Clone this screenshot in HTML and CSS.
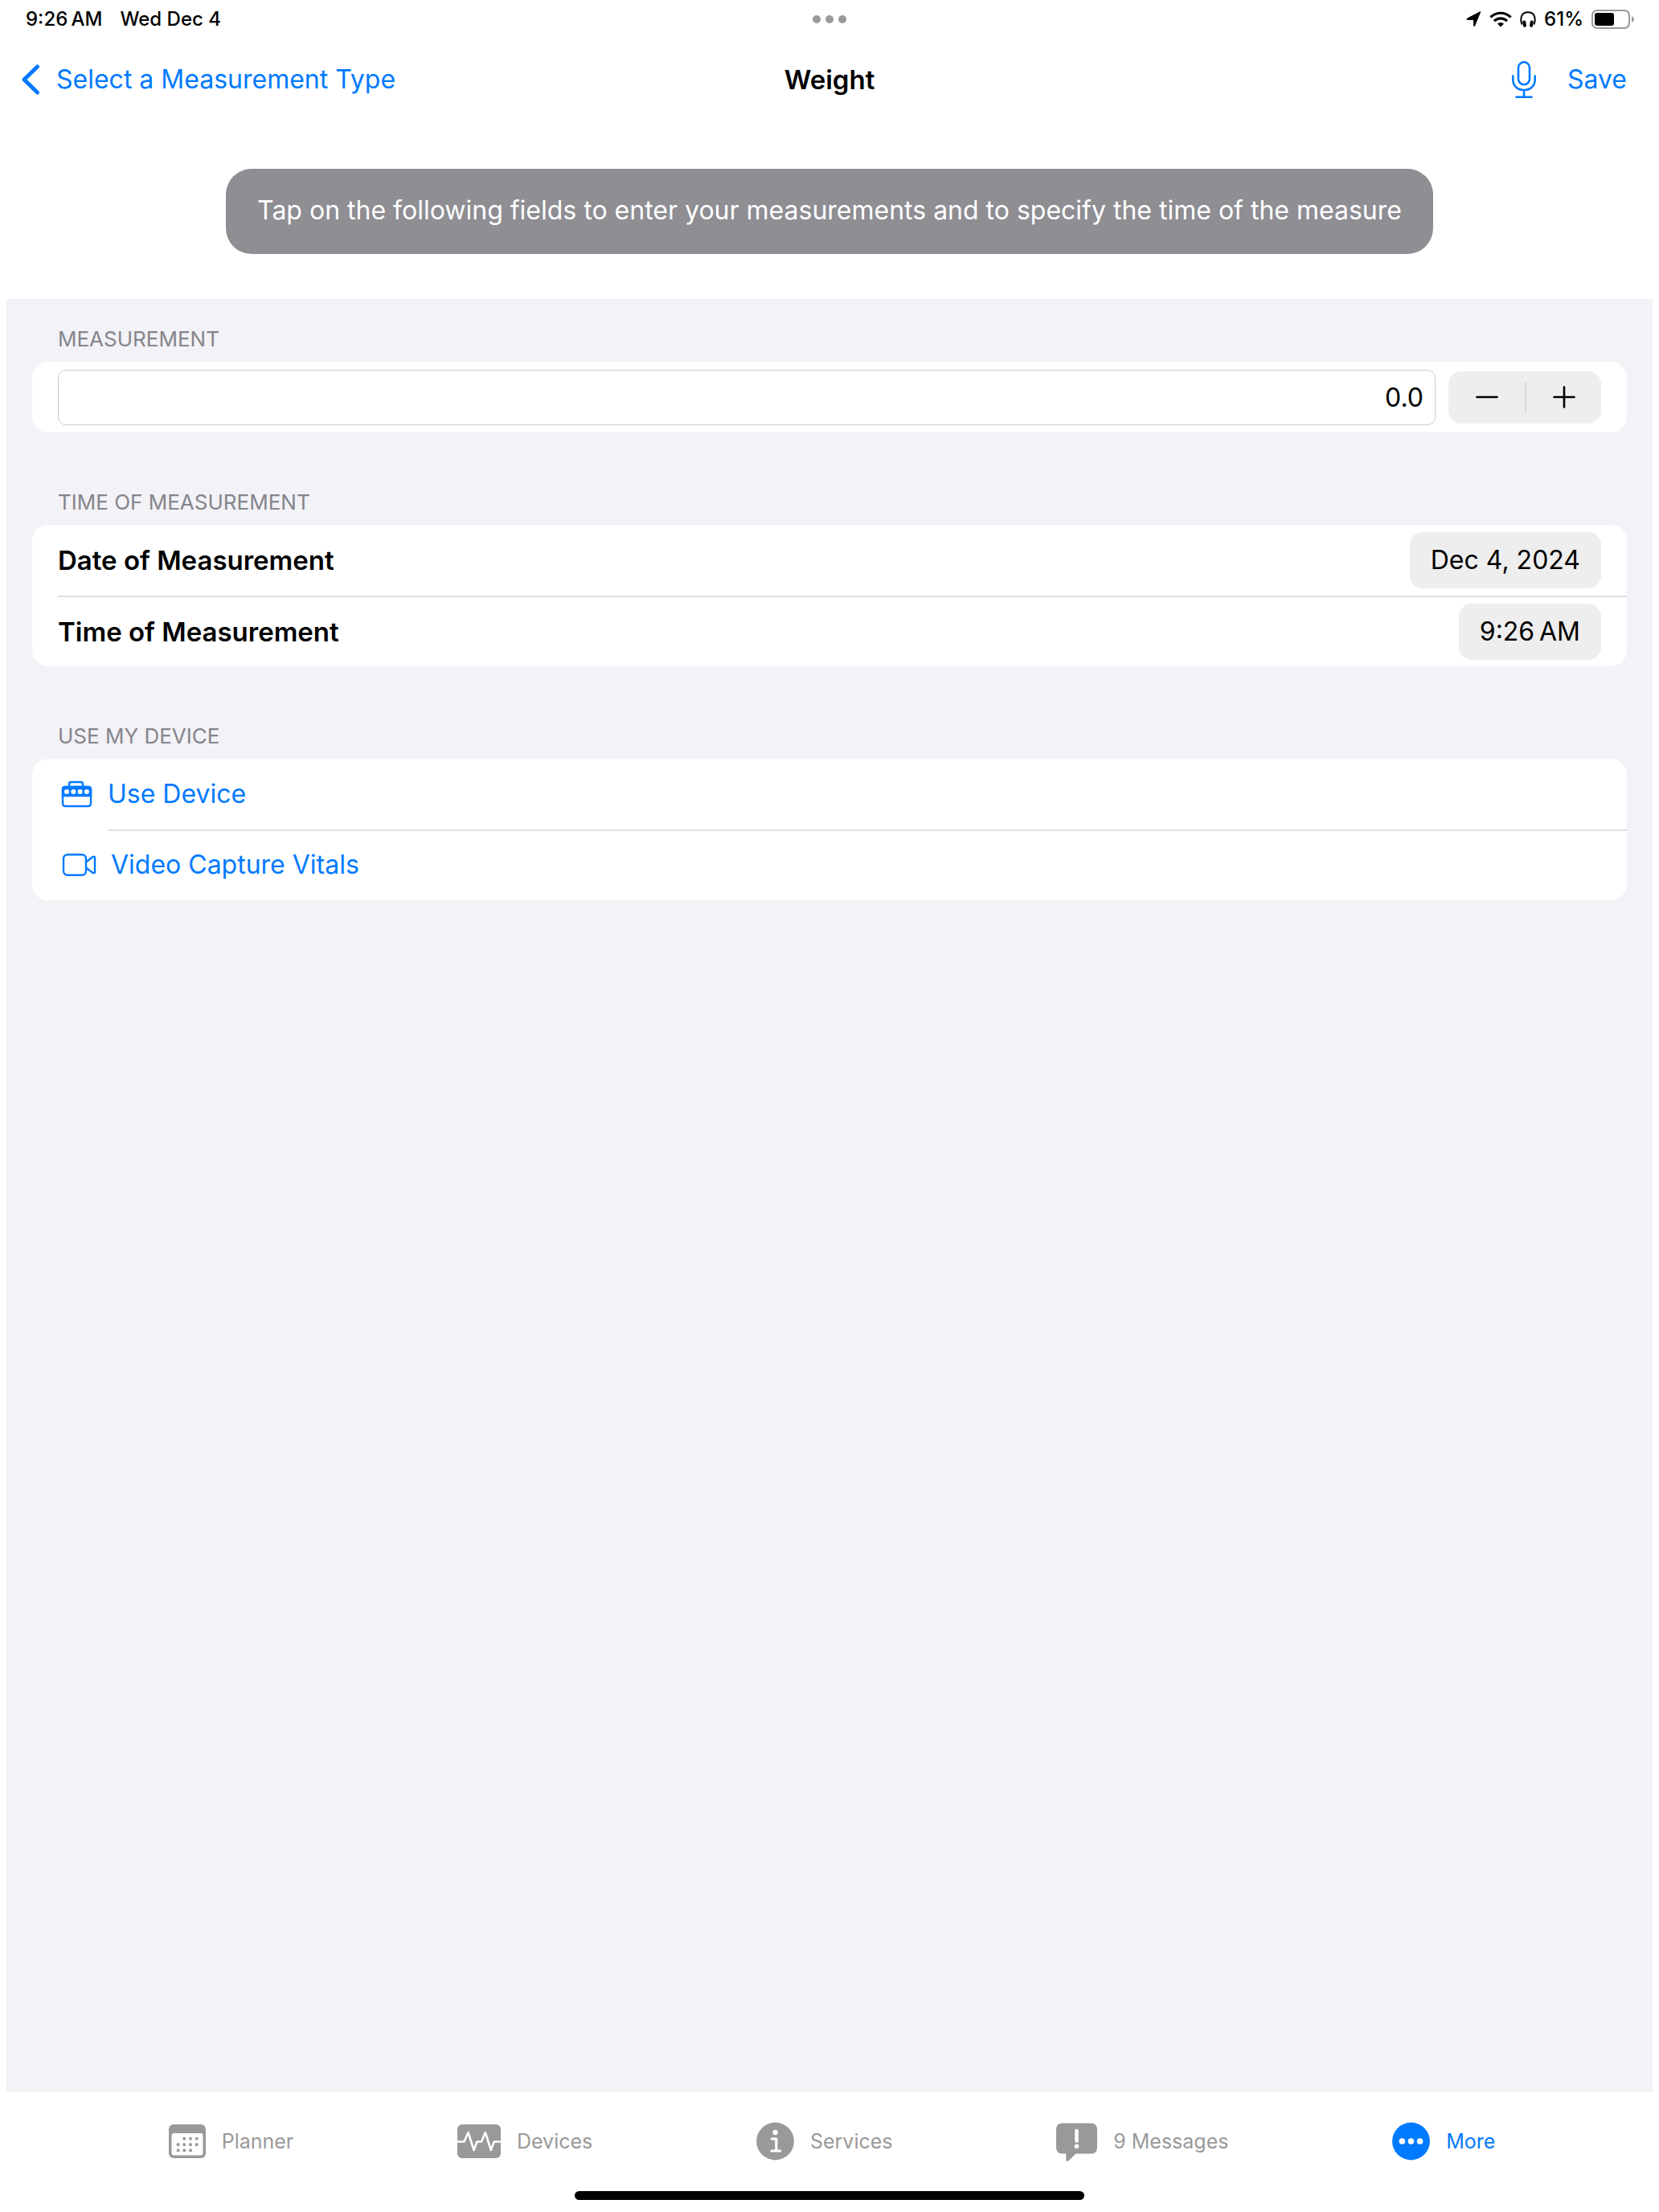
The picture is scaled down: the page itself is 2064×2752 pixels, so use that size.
FILE: index.html
```html
<!DOCTYPE html>
<html lang="en">
<head>
  <meta charset="UTF-8" />
  <meta name="viewport" content="width=device-width, initial-scale=1" />
  <title>Weight</title>
  <link rel="stylesheet" href="styles.css">
</head>
<body>

  <!-- Status bar -->
  <div class="status-bar">
    <div class="status-left">
      <span>9:26&#8201;AM</span>
      <span>Wed Dec 4</span>
    </div>
    <svg width="44" height="10" viewBox="0 0 44 10" fill="#999">
      <circle cx="6" cy="5" r="5"/><circle cx="22" cy="5" r="5"/><circle cx="38" cy="5" r="5"/>
    </svg>
    <div class="status-right">
      <svg width="19" height="20" viewBox="0 0 19 20">
        <path d="M17.6 1.2 10.6 18.2Q10 19.3 9.6 18V10.4H1.8Q0 10 1.4 9.1L17 1Q18.2.4 17.6 1.2z" fill="#000" stroke="#000" stroke-linejoin="round"/>
      </svg>
      <svg width="28" height="20" viewBox="0 0 28 20" fill="none" stroke="#000" stroke-width="3.2">
        <path d="M1.4 7.4a18 18 0 0 1 25.2 0"/>
        <path d="M6 12.1a11.3 11.3 0 0 1 16 0"/>
        <path d="M14 19.6l-4-4a5.8 5.8 0 0 1 8 0z" fill="#000" stroke="none"/>
      </svg>
      <svg width="20" height="20" viewBox="0 0 20 20">
        <path d="M2.6 16.5C-.2 9 1.5 1.2 10 1.2s10.2 7.8 7.4 15.3" fill="none" stroke="#000" stroke-width="2"/>
        <rect x="3.6" y="11.5" width="4" height="8.2" rx="1.9" transform="rotate(-8 5.5 15.5)"/>
        <rect x="12.4" y="11.5" width="4" height="8.2" rx="1.9" transform="rotate(8 14.5 15.5)"/>
      </svg>
      <span>61%</span>
      <svg width="52" height="24" viewBox="0 0 52 24">
        <rect x="1" y="1" width="46" height="22" rx="6" fill="none" stroke="#999" stroke-width="2"/>
        <rect x="4" y="4" width="24" height="16" rx="3" fill="#000"/>
        <path d="M50 8q3 1.5 3 4t-3 4z" fill="#999"/>
      </svg>
    </div>
  </div>

  <!-- Navigation -->
  <header class="nav-bar">
    <a href="#" class="back">
      <svg width="24" height="40" viewBox="0 0 24 40" fill="none" stroke="#007aff" stroke-width="5" stroke-linecap="round" stroke-linejoin="round">
        <path d="M20.5 4 4 20l16.5 16"/>
      </svg>
      Select a Measurement Type
    </a>
    <h1>Weight</h1>
    <div class="nav-actions">
      <button type="button" aria-label="Dictate">
        <svg width="32" height="48" viewBox="0 0 32 48" fill="none" stroke="#007aff" stroke-width="2.6" stroke-linecap="round">
          <rect x="9" y="2.3" width="14" height="28" rx="7"/>
          <path d="M2.3 19.5v4.5c0 8 6 13 13.7 13s13.7-5 13.7-13v-4.5M16 37v8.5M6.5 45.7h19"/>
        </svg>
      </button>
      <button type="button">Save</button>
    </div>
  </header>

  <p class="banner">Tap on the following fields to enter your measurements and to specify the time of the measure</p>

  <main class="panel">
    <section>
      <h2><label for="weight">MEASUREMENT</label></h2>
      <div class="card">
        <div class="row">
          <input type="text" id="weight" inputmode="decimal" value="0.0">
          <div class="stepper">
            <button type="button" aria-label="Decrease">
              <svg width="28" height="28" viewBox="0 0 28 28" stroke="#000" stroke-width="2.6" stroke-linecap="round"><path d="M1.5 14h25"/></svg>
            </button>
            <button type="button" aria-label="Increase">
              <svg width="28" height="28" viewBox="0 0 28 28" stroke="#000" stroke-width="2.6" stroke-linecap="round"><path d="M1.5 14h25M14 1.5v25"/></svg>
            </button>
          </div>
        </div>
      </div>
    </section>

    <section>
      <h2>TIME OF MEASUREMENT</h2>
      <div class="card">
        <div class="row">
          <label for="date">Date of Measurement</label>
          <button type="button" id="date" class="chip">Dec 4, 2024</button>
        </div>
        <div class="row">
          <label for="time">Time of Measurement</label>
          <button type="button" id="time" class="chip">9:26&#8201;AM</button>
        </div>
      </div>
    </section>

    <section>
      <h2>USE MY DEVICE</h2>
      <div class="card links">
        <a href="#" class="row">
          <svg width="46" height="36" viewBox="0 0 46 36" fill="none" stroke="#007aff" stroke-width="2.4">
            <path d="M14 8V5.5Q14 3 16.5 3h12Q31 3 31 5.5V8"/>
            <rect x="6" y="9" width="35" height="24" rx="3"/>
            <path d="M6 20v-8q0-3 3-3h29q3 0 3 3v8z" fill="#007aff"/>
            <g fill="#fff" stroke="none"><circle cx="11" cy="15" r="3"/><circle cx="19.3" cy="15" r="3"/><circle cx="27.6" cy="15" r="3"/><circle cx="35.9" cy="15" r="3"/></g>
          </svg>
          <span>Use Device</span>
        </a>
        <a href="#" class="row">
          <svg width="50" height="30" viewBox="0 0 50 30" fill="none" stroke="#007aff" stroke-width="2.4" stroke-linejoin="round">
            <rect x="7" y="2.2" width="28" height="25.6" rx="5"/>
            <path d="M35 11.5 43.5 5q2.5-1 2.5 1v18q0 2-2.5 1L35 18.5"/>
          </svg>
          <span>Video Capture Vitals</span>
        </a>
      </div>
    </section>
  </main>

  <!-- Tab bar -->
  <nav class="tab-bar">
    <a href="#">
      <svg width="46" height="48" viewBox="0 0 46 48" fill="#999">
        <rect y="3" width="46" height="42" rx="6"/>
        <rect x="3.5" y="14" width="39" height="27.5" rx="3" fill="#fff"/>
        <rect x="17.5" y="19" width="3.6" height="3.6" rx="1"/><rect x="25.2" y="19" width="3.6" height="3.6" rx="1"/><rect x="32.9" y="19" width="3.6" height="3.6" rx="1"/>
        <rect x="9.8" y="26.3" width="3.6" height="3.6" rx="1"/><rect x="17.5" y="26.3" width="3.6" height="3.6" rx="1"/><rect x="25.2" y="26.3" width="3.6" height="3.6" rx="1"/><rect x="32.9" y="26.3" width="3.6" height="3.6" rx="1"/>
        <rect x="9.8" y="33.6" width="3.6" height="3.6" rx="1"/><rect x="17.5" y="33.6" width="3.6" height="3.6" rx="1"/><rect x="25.2" y="33.6" width="3.6" height="3.6" rx="1"/>
      </svg>
      Planner
    </a>
    <a href="#">
      <svg width="54" height="48" viewBox="0 0 54 48">
        <rect y="3" width="54" height="42" rx="6" fill="#999"/>
        <path d="M0 24.5h8.5L13.5 13l7 22 4-10.5H30L34.8 13l7 22 4-10.5H54" fill="none" stroke="#fff" stroke-width="2.6" stroke-linejoin="round"/>
      </svg>
      Devices
    </a>
    <a href="#">
      <svg width="47" height="48" viewBox="0 0 47 48">
        <circle cx="23.5" cy="24" r="23.4" fill="#999"/>
        <circle cx="23.5" cy="13" r="3.2" fill="#fff"/>
        <path d="M19.2 21H24.8V36M18.8 36H29.6" fill="none" stroke="#fff" stroke-width="3.2" stroke-linecap="round" stroke-linejoin="round"/>
      </svg>
      Services
    </a>
    <a href="#">
      <svg width="51" height="48" viewBox="0 0 51 48">
        <path d="M8 1.5h35q8 0 8 8V31.5q0 8-8 8H24.5L15.5 48.3Q12.5 50 12.3 47V39.5H8q-8 0-8-8V9.5q0-8 8-8z" fill="#999"/>
        <path d="M25.5 11v12.5" stroke="#fff" stroke-width="4.6" stroke-linecap="round"/>
        <circle cx="25.5" cy="30.2" r="2.8" fill="#fff"/>
      </svg>
      9 Messages
    </a>
    <a href="#" class="active">
      <svg width="47" height="48" viewBox="0 0 47 48">
        <circle cx="23.5" cy="24" r="23.4" fill="#007aff"/>
        <g fill="#fff"><circle cx="12.4" cy="24" r="3.8"/><circle cx="23.5" cy="24" r="3.8"/><circle cx="34.6" cy="24" r="3.8"/></g>
      </svg>
      More
    </a>
  </nav>
  <div class="home-indicator"></div>

</body>
</html>
```
FILE: styles.css
```css
* {
  box-sizing: border-box;
}

body {
  margin: 0;
  min-height: 100vh;
  display: flex;
  flex-direction: column;
  background: #fff;
  color: #000;
  font-family: Inter, "Liberation Sans", sans-serif;
  font-size: 32px;
  line-height: 40px;
}

h1, h2, p {
  margin: 0;
}

h1 {
  font-size: 33px;
  font-weight: 600;
}

svg {
  display: block;
  flex: none;
  overflow: visible;
}

a {
  color: #007aff;
  text-decoration: none;
}

button, input {
  font: inherit;
  color: inherit;
}

button {
  margin: 0;
  padding: 0;
  border: none;
  background: none;
  cursor: pointer;
}

/* Status bar */
.status-bar {
  display: grid;
  grid-template-columns: 1fr auto 1fr;
  align-items: center;
  height: 48px;
  padding: 0 32px;
  font-size: 24px;
  font-weight: 500;
  line-height: 28px;
}
.status-left {
  display: flex;
  gap: 22px;
}
.status-right {
  display: flex;
  align-items: center;
  justify-content: flex-end;
  gap: 10px;
}

/* Navigation */
.nav-bar {
  display: grid;
  grid-template-columns: 1fr auto 1fr;
  align-items: center;
  height: 102px;
  padding: 0 26px;
}
.back {
  display: flex;
  align-items: center;
  gap: 20px;
}
.nav-actions {
  display: flex;
  align-items: center;
  justify-content: flex-end;
  gap: 38px;
  padding-right: 14px;
  color: #007aff;
}

.banner {
  align-self: center;
  margin: 60px 32px 56px;
  padding: 32px 39px 34px;
  border-radius: 32px;
  background: #8e8e93;
  color: #fff;
}

/* Form */
.panel {
  flex: 1;
  display: flex;
  flex-direction: column;
  gap: 71px;
  margin: 0 8px;
  padding: 34px 32px;
  background: #f2f2f7;
}
h2 {
  padding: 0 32px 12px;
  color: #85858b;
  font-size: 26px;
  font-weight: 400;
  line-height: 32px;
}
.card {
  border-radius: 20px;
  background: #fff;
}
.row {
  display: flex;
  align-items: center;
  justify-content: space-between;
  gap: 16px;
  min-height: 88px;
  margin-left: 32px;
  padding-right: 32px;
}
.row + .row {
  border-top: 2px solid #dedee0;
}
.row label {
  font-size: 33px;
  font-weight: 600;
}

input {
  flex: 1;
  min-width: 0;
  height: 69px;
  padding: 0 14px;
  border: 1px solid #ccc;
  border-radius: 10px;
  background: #fff;
  text-align: right;
}

.stepper {
  display: flex;
  align-items: center;
  height: 65px;
  border-radius: 16px;
  background: #eee;
}
.stepper button {
  display: flex;
  align-items: center;
  justify-content: center;
  width: 95px;
  height: 36px;
}
.stepper button + button {
  border-left: 2px solid #d5d5d6;
}

.chip {
  height: 70px;
  padding: 0 26px;
  border-radius: 16px;
  background: #eee;
}

.links .row {
  justify-content: flex-start;
}
/* divider starts at the text, not at the icon */
.links .row + .row {
  border-top: none;
  background: linear-gradient(#dedee0, #dedee0) 62px 0 / 100% 2px no-repeat;
}

/* Tab bar */
.tab-bar {
  display: flex;
  align-items: center;
  justify-content: space-evenly;
  height: 122px;
  padding-left: 6px;
  font-size: 25px;
}
.tab-bar a {
  display: flex;
  align-items: center;
  gap: 20px;
  color: #999;
}
.tab-bar a.active {
  color: #007aff;
}

.home-indicator {
  align-self: center;
  width: 634px;
  height: 11px;
  margin: 1px 0 15px;
  border-radius: 6px;
  background: #000;
}
```
